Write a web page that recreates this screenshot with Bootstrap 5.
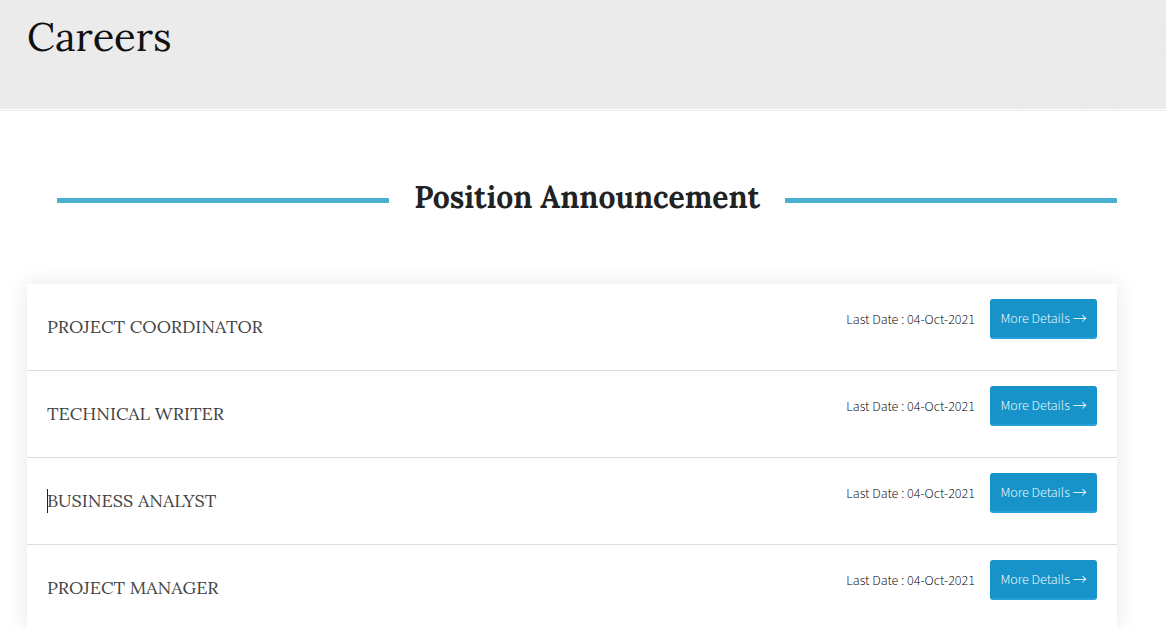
<!DOCTYPE html>
<html lang="en">
<head>
<meta charset="utf-8">
<meta name="viewport" content="width=device-width, initial-scale=1">
<title>Careers</title>
<link href="https://cdn.jsdelivr.net/npm/bootstrap@5.3.0/dist/css/bootstrap.min.css" rel="stylesheet">
<style>
  body { font-family: "Source Sans Pro", "Source Sans 3", "Noto Sans CJK SC", "Open Sans", sans-serif; font-weight: 300; color: #000; background: #fff; }
  h1, h2, h3 { font-family: Lora, "Liberation Serif", serif; }
  .page-gutter { padding-left: 27px; padding-right: 49px; }
  .banner { background: #ebebeb; height: 109px; }
  .banner-rule { height: 2px; border-bottom: 1px solid #ebebeb; }
  .banner-title { font-size: 40px; line-height: 56px; font-weight: 400; color: #111; padding-top: 9px; }
  .banner-art { fill: none; stroke: #eaeaea; stroke-width: 10; }
  .section-head { gap: 25px; padding: 65px 0; padding-left: 30px; }
  .section-title { font-size: 30px; line-height: 43px; font-weight: 700; color: #222; }
  .section-line { height: 5px; background: #4bafcd; margin-top: 5px; }
  .jobs { box-shadow: 0 0 20px rgba(0, 0, 0, .1); }
  .job { min-height: 87px; padding: 0 20px; border-bottom: 1px solid #ddd; }
  .job-title { font-size: 18px; line-height: 24px; font-weight: 400; color: #444; }
  .job-action { gap: 15px; padding-top: 15px; font-size: 14px; }
  .job-date { line-height: 20px; padding-top: 2px; }
  .btn-details { --bs-btn-color: #fff; --bs-btn-bg: #1793c9; --bs-btn-border-color: #1793c9;
    --bs-btn-hover-color: #fff; --bs-btn-hover-bg: #127fb0; --bs-btn-hover-border-color: #127fb0;
    font-size: 14px; line-height: 20px; font-weight: 300; width: 107px; height: 40px; padding: 2px 0 0;
    border: 0; border-bottom: 2px solid #26a0d8; border-radius: 3px; }
  .btn-arrow { font-family: "Noto Sans CJK SC", sans-serif; line-height: 1; }
  .text-caret { width: 1px; background: #222; }
</style>
</head>
<body>
<header>
  <div class="banner position-relative overflow-hidden page-gutter">
    <svg class="banner-art position-absolute top-0 end-0" width="700" height="109" viewBox="0 0 700 109" aria-hidden="true">
      <circle cx="439" cy="10" r="30"/><circle cx="510" cy="29" r="30"/><circle cx="578" cy="50" r="30"/><circle cx="645" cy="29" r="30"/><circle cx="716" cy="10" r="30"/>
      <path d="M398 109V66Q398 52 414 52H467M470 109V88Q470 72 486 72H540M602 72H644M653 109V88Q653 54 700 52M552 109Q552 92 568 92H602Q620 92 620 109"/>
      <path stroke-width="3" d="M28 12V58M41 60V30Q44 4 66 4T92 30V60M95 60V30Q98 4 120 4T144 30V60M24 72V107M36 72H50M90 62V107M181 4V32H216V2M210 58V95M234 34H258V4M264 64V80H278M300 64V80H318V64"/>
    </svg>
    <h1 class="banner-title position-relative m-0">Careers</h1>
  </div>
  <div class="banner-rule"></div>
</header>
<main class="page-gutter">
  <div class="section-head d-flex align-items-center">
    <div class="section-line flex-fill"></div>
    <h2 class="section-title m-0 text-nowrap">Position Announcement</h2>
    <div class="section-line flex-fill"></div>
  </div>
  <div class="jobs bg-white">
    <div class="job d-flex justify-content-between">
      <h3 class="job-title m-0 align-self-center">PROJECT COORDINATOR</h3>
      <div class="job-action d-flex align-items-center align-self-start"><span class="job-date">Last Date : 04-Oct-2021</span><button type="button" class="btn btn-details">More Details <span class="btn-arrow">→</span></button></div>
    </div>
    <div class="job d-flex justify-content-between">
      <h3 class="job-title m-0 align-self-center">TECHNICAL WRITER</h3>
      <div class="job-action d-flex align-items-center align-self-start"><span class="job-date">Last Date : 04-Oct-2021</span><button type="button" class="btn btn-details">More Details <span class="btn-arrow">→</span></button></div>
    </div>
    <div class="job d-flex justify-content-between">
      <h3 class="job-title m-0 align-self-center position-relative"><span class="text-caret position-absolute top-0 bottom-0 start-0"></span>BUSINESS ANALYST</h3>
      <div class="job-action d-flex align-items-center align-self-start"><span class="job-date">Last Date : 04-Oct-2021</span><button type="button" class="btn btn-details">More Details <span class="btn-arrow">→</span></button></div>
    </div>
    <div class="job d-flex justify-content-between">
      <h3 class="job-title m-0 align-self-center">PROJECT MANAGER</h3>
      <div class="job-action d-flex align-items-center align-self-start"><span class="job-date">Last Date : 04-Oct-2021</span><button type="button" class="btn btn-details">More Details <span class="btn-arrow">→</span></button></div>
    </div>
  </div>
</main>
<script src="https://cdn.jsdelivr.net/npm/bootstrap@5.3.0/dist/js/bootstrap.bundle.min.js"></script>
</body>
</html>
